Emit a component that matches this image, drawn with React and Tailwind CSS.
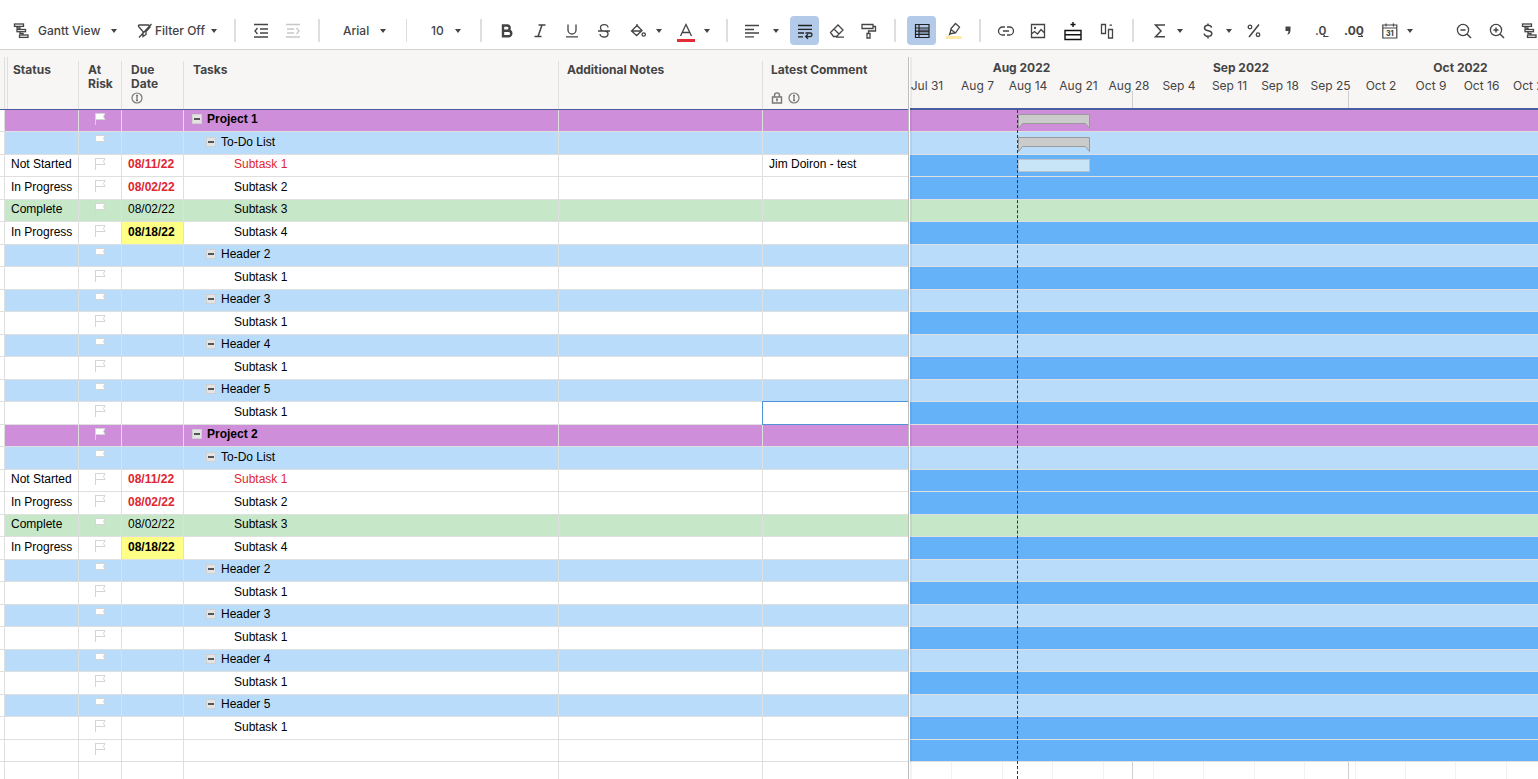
import React, { useState } from 'react';

const DAY = 7.2;

const months = [
  { name: 'Aug 2022', days: 31 },
  { name: 'Sep 2022', days: 30 },
  { name: 'Oct 2022', days: 31 },
];

const weeks = ['Jul 31', 'Aug 7', 'Aug 14', 'Aug 21', 'Aug 28', 'Sep 4', 'Sep 11', 'Sep 18', 'Sep 25', 'Oct 2', 'Oct 9', 'Oct 16', 'Oct 23'];

const projectRows = (name) => [
  { level: 0, task: name, kind: 'project' },
  { level: 1, task: 'To-Do List', kind: 'header' },
  { level: 2, task: 'Subtask 1', kind: 'task', status: 'Not Started', due: '08/11/22', late: true, red: true },
  { level: 2, task: 'Subtask 2', kind: 'task', status: 'In Progress', due: '08/02/22', late: true },
  { level: 2, task: 'Subtask 3', kind: 'done', status: 'Complete', due: '08/02/22' },
  { level: 2, task: 'Subtask 4', kind: 'task', status: 'In Progress', due: '08/18/22', soon: true },
  { level: 1, task: 'Header 2', kind: 'header' },
  { level: 2, task: 'Subtask 1', kind: 'task' },
  { level: 1, task: 'Header 3', kind: 'header' },
  { level: 2, task: 'Subtask 1', kind: 'task' },
  { level: 1, task: 'Header 4', kind: 'header' },
  { level: 2, task: 'Subtask 1', kind: 'task' },
  { level: 1, task: 'Header 5', kind: 'header' },
  { level: 2, task: 'Subtask 1', kind: 'task' },
];

const rows = [...projectRows('Project 1'), ...projectRows('Project 2'), { level: 2, task: '', kind: 'task' }];
rows[0].bar = 'summary';
rows[1].bar = 'summary';
rows[2].bar = 'task';
rows[2].comment = 'Jim Doiron - test';

const gridColors = {
  project: 'bg-[#ce8eda]',
  header: 'bg-[#badcfb]',
  done: 'bg-[#c6e7c8]',
  task: 'bg-white',
};

const ganttColors = {
  project: 'bg-[#ce8eda]',
  header: 'bg-[#badcfb]',
  done: 'bg-[#c6e7c8]',
  task: 'bg-[#66b2f8]',
};

const indents = ['pl-2', 'pl-[22px]', 'pl-[50px]'];

// rows are 22.5px on average, so they take turns
const rowHeight = (i) => (i % 2 ? 'h-[23px]' : 'h-[22px]');

const Icon = ({ children, className = 'text-[#444]' }) => (
  <svg viewBox="0 0 18 17" className={`h-[17px] w-[18px] shrink-0 overflow-visible ${className}`} fill="none" stroke="currentColor" strokeWidth="1.3" aria-hidden="true">
    {children}
  </svg>
);

const Caret = () => (
  <svg viewBox="0 0 6 4" className="h-1 w-[6px] shrink-0 fill-[#444]" aria-hidden="true">
    <path d="M0 0h6L3 4z" />
  </svg>
);

const Separator = ({ className }) => <div className={`h-[23px] w-[2px] shrink-0 bg-[#dedede] ${className}`} />;

const ToolButton = ({ label, className = '', width = 'w-8', disabled, children }) => (
  <button type="button" aria-label={label} title={label} disabled={disabled} className={`flex h-[29px] shrink-0 items-center justify-center ${width} ${className}`}>
    {children}
  </button>
);

const CaretButton = ({ label, className = '', gap = 'gap-[2px]', children }) => (
  <button type="button" aria-label={label} title={label} className={`flex h-[29px] shrink-0 items-center ${gap} ${className}`}>
    <span className="flex w-8 justify-center">{children}</span>
    <Caret />
  </button>
);

const GanttIcon = () => (
  <Icon>
    <rect x="2.5" y="2" width="9" height="2.4" />
    <rect x="5" y="7.5" width="8.5" height="2.2" />
    <rect x="7.5" y="13" width="8.5" height="2.4" />
    <path d="M5 4.5v1.5h3v1.5M8 9.7v1.8h3V13" />
  </Icon>
);

const InfoIcon = () => (
  <svg viewBox="0 0 12 12" className="h-3 w-3" fill="none" stroke="#777" aria-hidden="true">
    <circle cx="6" cy="6" r="5" strokeWidth="1.2" />
    <path d="M6 3.2v5.6M5 3.5h2M5 8.5h2" strokeWidth="1.3" />
  </svg>
);

const LockIcon = () => (
  <svg viewBox="0 0 12 12" className="h-3 w-3" fill="none" stroke="#777" aria-hidden="true">
    <path d="M1.5 5h9v6h-9zM3.5 5V3.2a2.5 2.3 0 0 1 5 0V5" strokeWidth="1.4" />
    <path d="M6 6.5v3M5 7.2h2" strokeWidth="1.4" />
  </svg>
);

const Toolbar = () => (
  <div className="flex h-[50px] shrink-0 items-start overflow-hidden border-b border-[#d3d1ce] bg-white pt-4 text-xs font-medium text-[#444]">
    <div className="flex items-center">
      <button type="button" className="ml-3 flex h-[29px] w-[105px] shrink-0 items-center whitespace-nowrap">
        <GanttIcon />
        <span className="ml-2 flex-1 text-left">Gantt View</span>
        <Caret />
      </button>
      <button type="button" className="ml-5 flex h-[29px] w-20 shrink-0 items-center whitespace-nowrap">
        <Icon>
          <path d="M1.5 3h10L13 4.5M1.5 3v1.5l4.500 5v5l3-2v-3l4.500-5M14.500 2L2 15.500" />
        </Icon>
        <span className="flex-1 text-left">Filter Off</span>
        <Caret />
      </button>
      <Separator className="ml-[17px]" />
      <ToolButton label="Outdent" className="ml-[9px]">
        <Icon>
          <path d="M2 2.5h14M8 7h8M8 11h8M2 15h14M5.5 6L3 9l2.5 3" />
        </Icon>
      </ToolButton>
      <ToolButton label="Indent" disabled>
        <Icon className="text-[#c8c8c8]">
          <path d="M2 2.5h14M3 7h7M3 11h7M2 15h14M12.5 6L15 9l-2.5 3" />
        </Icon>
      </ToolButton>
      <Separator className="ml-[9px]" />
      <button type="button" className="ml-[23px] flex h-[29px] w-[43px] shrink-0 items-center justify-between">
        Arial
        <Caret />
      </button>
      <div className="ml-5 h-[23px] w-px shrink-0 bg-[#dedede]" />
      <button type="button" className="ml-6 flex h-[29px] w-[30px] shrink-0 items-center justify-between">
        10
        <Caret />
      </button>
      <Separator className="ml-[19px]" />
      <ToolButton label="Bold" className="ml-[9px]">
        <Icon>
          <path d="M5 3.5h4.7a2.7 2.7 0 0 1 0 5.2H5zM5 8.7h5.500a2.800 2.800 0 0 1 0 5.600H5z" strokeWidth="2.4" />
        </Icon>
      </ToolButton>
      <ToolButton label="Italic" className="ml-px">
        <Icon>
          <path d="M7.500 3h7M3.500 14.500h7M11 3L7 14.500" strokeWidth="1.5" />
        </Icon>
      </ToolButton>
      <ToolButton label="Underline">
        <Icon>
          <path d="M5 2.5V8a4 4 0 0 0 8 0V2.5M3 14.8h12" />
        </Icon>
      </ToolButton>
      <ToolButton label="Strikethrough">
        <Icon>
          <path d="M13 5.5C13 1.6 5.5 1.6 5.5 5.5c0 2 1.500 3.500 3.500 3.500 2.500 0 4 1 4 3 0 4-8 4-8 0M3 9h12" />
        </Icon>
      </ToolButton>
      <CaretButton label="Background color" className="ml-[2px]">
        <Icon>
          <path d="M8 3.5L2.5 9l5.200 4.500L13 8.500zM2.500 9H13M8 2v3" />
          <circle cx="14.7" cy="12.5" r="1.7" />
        </Icon>
      </CaretButton>
      <CaretButton label="Text color" className="ml-2">
        <Icon>
          <path d="M3.500 14L9 2.500 14.500 14M5.500 10.500h7" />
          <path d="M0 18.5h18" stroke="#e22d36" strokeWidth="3" />
        </Icon>
      </CaretButton>
      <Separator className="ml-4" />
      <CaretButton label="Align" className="ml-2" gap="gap-[5px]">
        <Icon>
          <path d="M2 3.500h14M2 7.500h9M2 11h14M2 14.800h9" />
        </Icon>
      </CaretButton>
      <ToolButton label="Wrap text" width="w-[29px]" className="ml-[11px] rounded bg-[#b3cbe9]">
        <Icon className="text-[#222]">
          <path d="M2 3.500h14M2 7.300h14M2 11h6M2 14.800h5M9.500 11h4.700c2.400 0 2.400 3.600 0 3.600H10M12 12.300l-2.300 2.300L12 16.900" />
        </Icon>
      </ToolButton>
      <ToolButton label="Clear formatting" className="ml-[2px]">
        <Icon>
          <path d="M2.500 10.500l7.500-7.500 5 5-6.500 6.500H5.500zM6 7l5 5M8 15.200h8" />
        </Icon>
      </ToolButton>
      <ToolButton label="Format painter">
        <Icon>
          <path d="M2 2.500h11v4H2zM13 4.500h2.500V9h-7v2.500M7 11.500h3V16H7z" />
        </Icon>
      </ToolButton>
      <Separator className="ml-[9px]" />
      <ToolButton label="Conditional formatting" width="w-[29px]" className="ml-[11px] rounded bg-[#b3cbe9]">
        <Icon className="text-[#222]">
          <path d="M6 6.500h10v5H6z" fill="#7f8ea6" stroke="none" />
          <path d="M2.500 2.500h13.500v13H2.500zM6 2.500v13M2.500 6h13.500M2.500 9.200h13.500M2.500 12.300h13.500" strokeWidth="1.2" />
        </Icon>
      </ToolButton>
      <ToolButton label="Highlight changes" className="ml-[2px]">
        <Icon>
          <path d="M1 15.500h15.500" stroke="#fdeaa8" strokeWidth="3" />
          <path d="M10.500 1.500l4 3.500-4 6-4 .5-2 1 1-3 .5-3zM6 7.500l4.500 3.500" />
        </Icon>
      </ToolButton>
      <Separator className="ml-[9px]" />
      <ToolButton label="Link" className="ml-[9px]">
        <Icon>
          <path d="M8 5H5.500a4 4 0 0 0 0 8H8M10 5h2.500a4 4 0 0 1 0 8H10M6 9h6" />
        </Icon>
      </ToolButton>
      <ToolButton label="Image">
        <Icon>
          <path d="M2.500 2.500h13v13h-13zM2.500 12l3-2.500 3 2.500L12 7.500l3.500 3.500" />
          <circle cx="6" cy="6" r="0.5" />
        </Icon>
      </ToolButton>
      <ToolButton label="Insert row" className="ml-[3px]">
        <Icon className="text-[#111]">
          <path d="M1 8.500h16v9H1zM1 12.800h16M9 0v5M6.500 2.500h5" strokeWidth="1.4" />
        </Icon>
      </ToolButton>
      <ToolButton label="Insert column" className="ml-[2px]">
        <Icon>
          <path d="M3.500 2.500h4v9h-4zM10.500 7.500h4v8.500h-4zM11.500 3.200h2.500" />
        </Icon>
      </ToolButton>
      <Separator className="ml-[9px]" />
      <CaretButton label="Sum" className="ml-[10px]" gap="gap-px">
        <Icon>
          <path d="M14 3H4.500L10 9l-5.500 5.800H14" strokeWidth="1.5" />
        </Icon>
      </CaretButton>
      <CaretButton label="Currency" className="ml-[9px]">
        <Icon>
          <path d="M12.500 5.800C12.500 2.500 5.500 2.500 5.500 6c0 3.800 7.300 1.800 7.300 5.500 0 3.800-7.600 3.800-7.600 0M9 1.500v2M9 14v2.500" strokeWidth="1.5" />
        </Icon>
      </CaretButton>
      <ToolButton label="Percent" className="ml-[6px]">
        <Icon>
          <path d="M14 2.500L4 15" strokeWidth="1.5" />
          <circle cx="5" cy="5" r="1.8" />
          <circle cx="13" cy="12.7" r="1.8" />
        </Icon>
      </ToolButton>
      <ToolButton label="Thousands" className="ml-[2px]">
        <Icon>
          <path d="M6.500 4.500h5V8c0 2.500-1 4.500-3.500 4.500 1.200-1 1.500-2.500 1.500-3.500h-3z" fill="currentColor" stroke="none" />
        </Icon>
      </ToolButton>
      <ToolButton label="Decrease decimal" className="ml-[2px]">
        <Icon>
          <text x="2" y="13" fontSize="12" fontWeight="600" fill="currentColor" stroke="none">.0</text>
          <path d="M15.500 14.500h-5M12 13l-2 1.500" strokeWidth="1" />
        </Icon>
      </ToolButton>
      <ToolButton label="Increase decimal">
        <Icon>
          <text x="-1" y="13" fontSize="12" fontWeight="700" fill="currentColor" stroke="none">.00</text>
          <path d="M13 14.500h5M16 13l2 1.500" strokeWidth="1" />
        </Icon>
      </ToolButton>
      <CaretButton label="Date format" className="ml-1" gap="gap-px">
        <Icon>
          <path d="M1.800 3h14v13h-14zM1.800 6h14M5 1.500v3M12.500 1.500v3" strokeWidth="1.2" />
          <text x="5" y="13.5" fontSize="7" fontWeight="800" fill="currentColor" stroke="none">31</text>
        </Icon>
      </CaretButton>
      <ToolButton label="Zoom out" className="ml-[35px]">
        <Icon>
          <circle cx="8" cy="8" r="5.6" />
          <path d="M12 12l4 4M5.500 8h5" strokeWidth="1.5" />
        </Icon>
      </ToolButton>
      <ToolButton label="Zoom in" className="ml-px">
        <Icon>
          <circle cx="8" cy="8" r="5.6" />
          <path d="M12 12l4 4M5.500 8h5M8 5.500v5" strokeWidth="1.5" />
        </Icon>
      </ToolButton>
      <ToolButton label="Gantt settings">
        <GanttIcon />
      </ToolButton>
    </div>
  </div>
);

const HeaderCell = ({ children, pad = 'pl-[9px]', last }) => (
  <th scope="col" className="h-[60px] border-b border-[#4c5c9e] p-0 pt-[11px] text-left align-top">
    <div className={`h-12 pt-[2px] ${pad} ${last ? '' : 'border-r border-[#dfdfdf]'}`}>{children}</div>
  </th>
);

const Flag = () => (
  <svg viewBox="0 0 12 13" className="h-[13px] w-3" fill="none" stroke="#d5d5d5" aria-hidden="true">
    <path d="M1.500 1.500h9.500L9.500 4.500 11 7.500H1.500z" fill="#fff" />
    <path d="M1.500 1v12" />
  </svg>
);

const GridRow = ({ row, index, selected, onSelect }) => {
  const cell = 'border-b border-r border-[#dfdfdf] p-0 align-top whitespace-nowrap leading-[18px]';
  const pad = index % 2 ? 'pt-px' : 'pt-0';
  const dueStyle = row.late ? 'font-bold text-[#e0262f]' : row.soon ? 'bg-[#feff85] font-bold' : '';

  return (
    <tr className={`${rowHeight(index)} ${gridColors[row.kind]}`}>
      <td className={`${cell} bg-white`}></td>
      <td className={`${cell} ${pad} pl-[6px]`}>{row.status}</td>
      <td className={`${cell} pt-[2px]`}>
        <button type="button" aria-label="At risk" className="mx-auto block">
          <Flag />
        </button>
      </td>
      <td className={`${cell} ${pad} pl-[6px] ${dueStyle}`}>{row.due}</td>
      <td className={`${cell} ${pad} ${indents[row.level]} ${row.level === 0 ? 'font-bold' : ''} ${row.red ? 'text-[#e0262f]' : ''}`}>
        <div className="flex items-center gap-[5px]">
          {row.level < 2 && (
            <button type="button" aria-label={`Collapse ${row.task}`} className="flex h-[10px] w-[10px] items-center justify-center border border-[#d0d0d0] bg-[#e4e4e4]">
              <span className="h-[2px] w-[6px] bg-[#555]" />
            </button>
          )}
          {row.task}
        </div>
      </td>
      <td className={`${cell} ${pad}`}></td>
      <td className={`${cell} ${pad} relative border-r-0 pl-[6px]`} onClick={onSelect}>
        {row.comment}
        {selected && <div className="absolute -top-px right-0 -bottom-px -left-px border border-r-0 border-[#5292d8]" />}
      </td>
    </tr>
  );
};

const Grid = () => {
  const [selected, setSelected] = useState(13);

  return (
    <div className="flex shrink-0 flex-col">
      <table className="w-[908px] table-fixed border-separate border-spacing-0 font-['Liberation_Sans',Arial,sans-serif] text-xs text-black">
        <colgroup>
          <col className="w-[5px]" />
          <col className="w-[74px]" />
          <col className="w-[43px]" />
          <col className="w-[62px]" />
          <col className="w-[375px]" />
          <col className="w-[204px]" />
          <col className="w-[145px]" />
        </colgroup>
        <thead className="bg-[#f8f6f5] font-['Inter',sans-serif] text-xs leading-[14px] font-semibold text-[#444]">
          <tr>
            <th className="h-[60px] border-b border-[#4c5c9e] p-0 pt-[7px] align-top">
              <div className="h-[52px] border-r border-[#dfdfdf]" />
            </th>
            <th scope="col" className="border-b border-[#4c5c9e] p-0 pt-[7px] text-left align-top">
              <div className="ml-[2px] h-[52px] border-l border-[#dfdfdf] pt-1">
                <div className="h-12 border-r border-[#dfdfdf] pt-[2px] pl-[5px]">Status</div>
              </div>
            </th>
            <HeaderCell>At<br />Risk</HeaderCell>
            <HeaderCell>
              Due<br />Date
              <div className="mt-px"><InfoIcon /></div>
            </HeaderCell>
            <HeaderCell>Tasks</HeaderCell>
            <HeaderCell pad="pl-2">Additional Notes</HeaderCell>
            <HeaderCell pad="pl-2" last>
              Latest Comment
              <div className="mt-[15px] flex gap-[5px]"><LockIcon /><InfoIcon /></div>
            </HeaderCell>
          </tr>
        </thead>
        <tbody>
          {rows.map((row, i) => (
            <GridRow key={i} row={row} index={i} selected={selected === i} onSelect={() => setSelected(i)} />
          ))}
        </tbody>
      </table>
      <div className="flex flex-1">
        <div className="w-[5px] border-r border-[#dfdfdf]" />
        <div className="w-[74px] border-r border-[#dfdfdf]" />
        <div className="w-[43px] border-r border-[#dfdfdf]" />
        <div className="w-[62px] border-r border-[#dfdfdf]" />
        <div className="w-[375px] border-r border-[#dfdfdf]" />
        <div className="w-[204px] border-r border-[#dfdfdf]" />
      </div>
    </div>
  );
};

const SummaryBar = () => (
  <svg viewBox="0 0 72 15" className="h-[15px] w-[72px]" aria-hidden="true">
    <path d="M0.5 0.5h71v14l-4-5h-63l-4 5z" fill="#cbcbcb" stroke="#9a9a9a" />
  </svg>
);

// whole-pixel width of week i, counted from Sunday Jul 31
const weekWidth = (i) => Math.round((i + 1) * 7 * DAY) - Math.round(i * 7 * DAY);

const Gantt = () => (
  <div className="relative flex min-w-0 flex-1 flex-col overflow-hidden">
    <div className="h-[60px] shrink-0 border-b-2 border-[#4c5c9e] bg-[#f8f6f5] text-xs text-[#444]">
      <div className="flex h-full flex-col pt-[10px]">
        <div className="flex font-bold">
          {months.map((m) => (
            <div key={m.name} className="shrink-0 text-center leading-4" style={{ width: Math.round(m.days * DAY) }}>{m.name}</div>
          ))}
        </div>
        <div className="-ml-2 flex pt-[2px]">
          {weeks.map((w, i) => (
            <div key={w} className="shrink-0 text-center leading-4 whitespace-nowrap" style={{ width: weekWidth(i) }}>{w}</div>
          ))}
        </div>
        <div className="-mt-[3px] flex flex-1">
          {months.map((m) => (
            <div key={m.name} className="shrink-0 border-r border-[#cfcfcf]" style={{ width: Math.round(m.days * DAY) }} />
          ))}
        </div>
      </div>
    </div>
    {rows.map((row, i) => (
      <div key={i} className={`relative shrink-0 border-b border-[#dfdfdf] ${rowHeight(i)} ${ganttColors[row.kind]}`}>
        {row.bar && (
          <div className={`absolute ${i % 2 ? 'top-[5px]' : 'top-1'}`} style={{ left: Math.round(15 * DAY) }}>
            {row.bar === 'summary' ? <SummaryBar /> : <div className="h-[13px] w-[72px] border border-[#b9c3c9] bg-[#c7e5f6]" />}
          </div>
        )}
      </div>
    ))}
    <div className="relative -ml-2 flex flex-1">
      {weeks.map((w, i) => (
        <div key={w} className="shrink-0 border-r border-[#f2f2f2]" style={{ width: weekWidth(i) }} />
      ))}
      <div className="absolute inset-y-0 left-2 flex">
        {months.map((m) => (
          <div key={m.name} className="shrink-0 border-r border-[#cfcfcf]" style={{ width: Math.round(m.days * DAY) }} />
        ))}
      </div>
    </div>
    <div className="absolute top-[60px] bottom-0 border-l border-dashed border-[#333]" style={{ left: Math.round(15 * DAY) - 1 }} />
    <div className="absolute top-[7px] bottom-0 left-0 w-[2px] bg-black/5" />
  </div>
);

const App = () => {
  return (
    <div className="flex h-screen flex-col overflow-hidden bg-white font-['Inter',sans-serif]">
      <Toolbar />
      <div className="flex min-h-0 flex-1 overflow-hidden">
        <Grid />
        <div className="flex w-[2px] shrink-0 flex-col">
          <div className="h-[7px] bg-[#f8f6f5]" />
          <div className="flex-1 border-l border-[#bdbdbd]" />
        </div>
        <Gantt />
      </div>
    </div>
  );
};

export default App;
